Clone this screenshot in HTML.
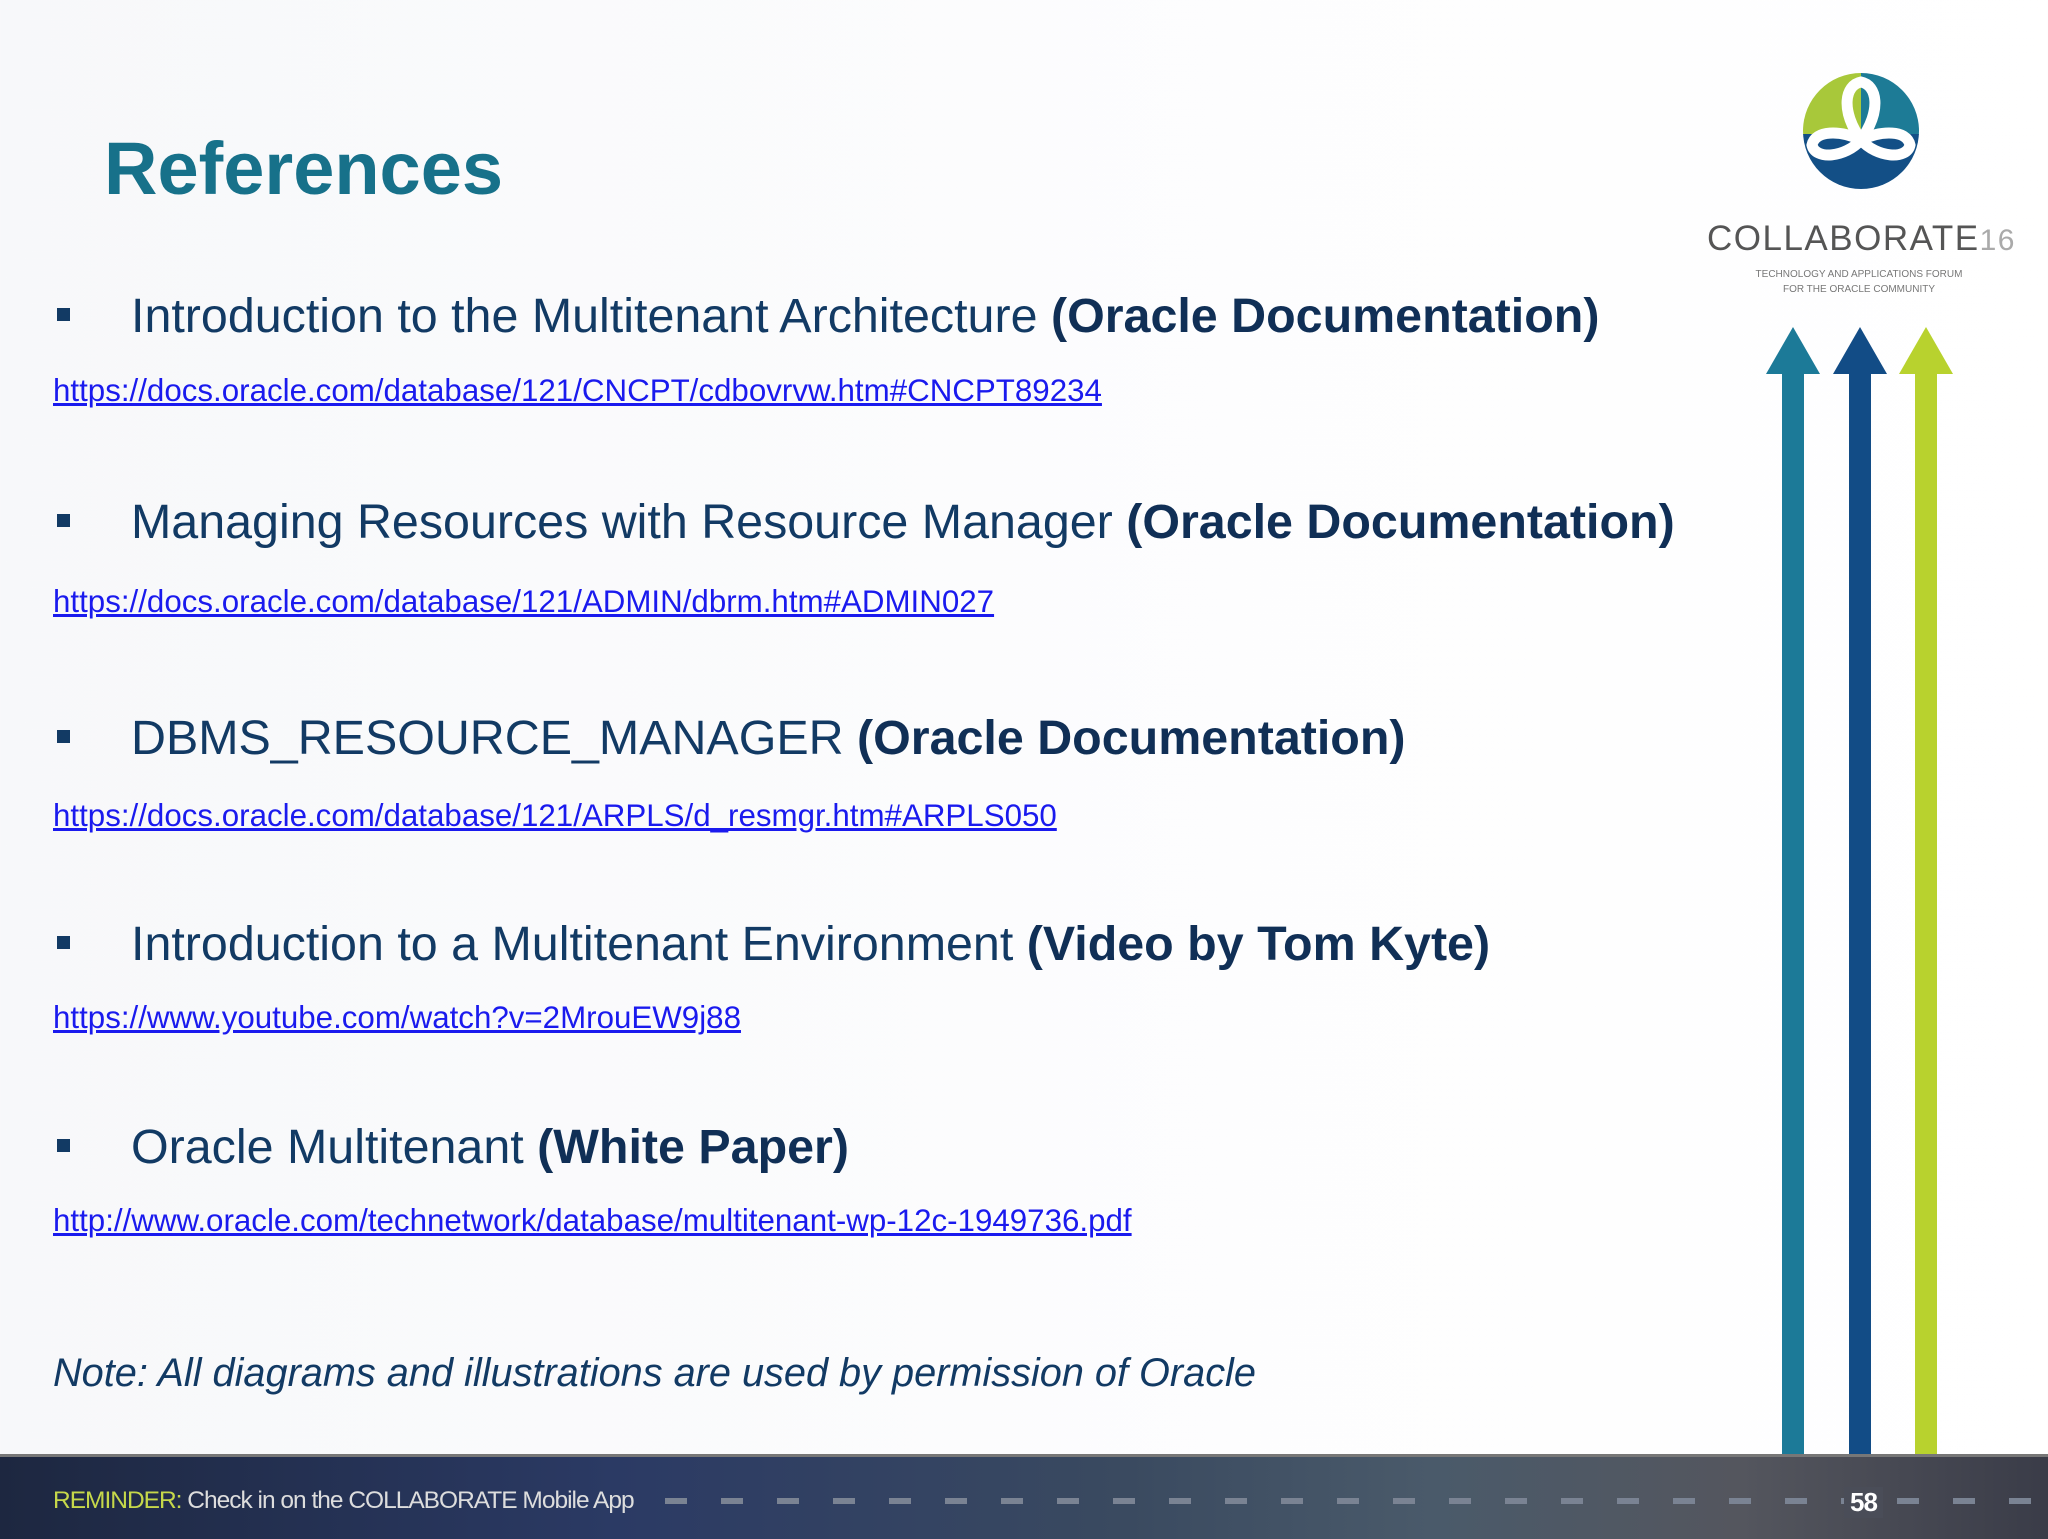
<!DOCTYPE html>
<html><head><meta charset="utf-8"><style>
*{margin:0;padding:0}
body{width:2048px;height:1536px;position:relative;overflow:hidden;background:linear-gradient(90deg,#f7f8fa,#fdfdfe 60%,#fff);font-family:"Liberation Sans",sans-serif}
.t{position:absolute;left:104px;top:126px;font-size:74px;font-weight:bold;color:#17718a}
.h{position:absolute;left:131px;font-size:48.4px;color:#123a64;white-space:nowrap;line-height:1}
.h b{color:#102f56}
.h:before{content:"";position:absolute;left:-74px;top:16px;width:13px;height:13px;background:#123a64}
.l{position:absolute;left:53px;font-size:31.3px;color:#1a1aee;text-decoration:underline;white-space:nowrap;line-height:1}
.n{position:absolute;left:53px;top:1351px;font-size:39.7px;font-style:italic;color:#123a64}
.f{position:absolute;left:0;top:1454px;width:2048px;height:82px;background:linear-gradient(90deg,#1d2740,#2b3a64 30%,#3a4a60 55%,#4a5a6a 70%,#54565e 85%,#3a3c48);border-top:3px solid #777}
.f span{position:absolute;top:30px;font-size:24.5px;color:#ddd;letter-spacing:-1px}
</style></head><body>
<div class="t">References</div>
<div class="h" style="top:292px">Introduction to the Multitenant Architecture <b>(Oracle Documentation)</b></div>
<div class="l" style="top:375px">https://docs.oracle.com/database/121/CNCPT/cdbovrvw.htm#CNCPT89234</div>
<div class="h" style="top:498px">Managing Resources with Resource Manager <b>(Oracle Documentation)</b></div>
<div class="l" style="top:586px">https://docs.oracle.com/database/121/ADMIN/dbrm.htm#ADMIN027</div>
<div class="h" style="top:714px">DBMS_RESOURCE_MANAGER <b>(Oracle Documentation)</b></div>
<div class="l" style="top:800px">https://docs.oracle.com/database/121/ARPLS/d_resmgr.htm#ARPLS050</div>
<div class="h" style="top:920px">Introduction to a Multitenant Environment <b>(Video by Tom Kyte)</b></div>
<div class="l" style="top:1002px">https://www.youtube.com/watch?v=2MrouEW9j88</div>
<div class="h" style="top:1123px">Oracle Multitenant <b>(White Paper)</b></div>
<div class="l" style="top:1205px">http://www.oracle.com/technetwork/database/multitenant-wp-12c-1949736.pdf</div>
<div class="n">Note: All diagrams and illustrations are used by permission of Oracle</div>
<svg style="position:absolute;left:0;top:0" width="2048" height="1536">
<defs><clipPath id="c"><circle cx="1861" cy="131" r="58"/></clipPath></defs>
<g clip-path="url(#c)">
<rect x="1790" y="60" width="72" height="75" fill="#a8c83a"/>
<rect x="1861" y="60" width="72" height="75" fill="#1d7b96"/>
<rect x="1790" y="134" width="144" height="60" fill="#134f86"/>
</g>
<g fill="none" stroke="#fff" stroke-width="11">
<path d="M1861 140 C1840 110 1845 85 1861 82 C1877 85 1882 110 1861 140"/>
<path d="M1861 140 C1840 130 1815 130 1812 145 C1815 160 1845 158 1861 140"/>
<path d="M1861 140 C1882 130 1907 130 1910 145 C1907 160 1877 158 1861 140"/>
</g>
<text x="1707" y="250" font-family="Liberation Sans" font-size="35" fill="#555" letter-spacing="1.5">COLLABORATE<tspan fill="#aaa" font-size="30">16</tspan></text>
<text x="1859" y="277" font-family="Liberation Sans" font-size="10" fill="#777" text-anchor="middle">TECHNOLOGY AND APPLICATIONS FORUM</text>
<text x="1859" y="292" font-family="Liberation Sans" font-size="10" fill="#777" text-anchor="middle">FOR THE ORACLE COMMUNITY</text>
<g><rect x="1782" y="370" width="22" height="1090" fill="#1c7a98"/><polygon points="1793,327 1766,374 1820,374" fill="#1c7a98"/></g>
<g><rect x="1849" y="370" width="22" height="1090" fill="#124c86"/><polygon points="1860,327 1833,374 1887,374" fill="#124c86"/></g>
<g><rect x="1915" y="370" width="22" height="1090" fill="#b8d22e"/><polygon points="1926,327 1899,374 1953,374" fill="#b8d22e"/></g>
</svg>
<div class="f">
<span style="left:53px"><b style="color:#c6d84a;font-weight:normal">REMINDER:</b> Check in on the COLLABORATE Mobile App</span>
<svg style="position:absolute;left:665px;top:40px" width="1383" height="8"><line x1="0" y1="4" x2="1383" y2="4" stroke="#7a8393" stroke-width="6" stroke-dasharray="22 34"/></svg>
<span style="left:1844px;color:#fff;font-weight:bold;font-size:26px;background:#4a4d58;padding:0 6px">58</span>
</div>
</body></html>
